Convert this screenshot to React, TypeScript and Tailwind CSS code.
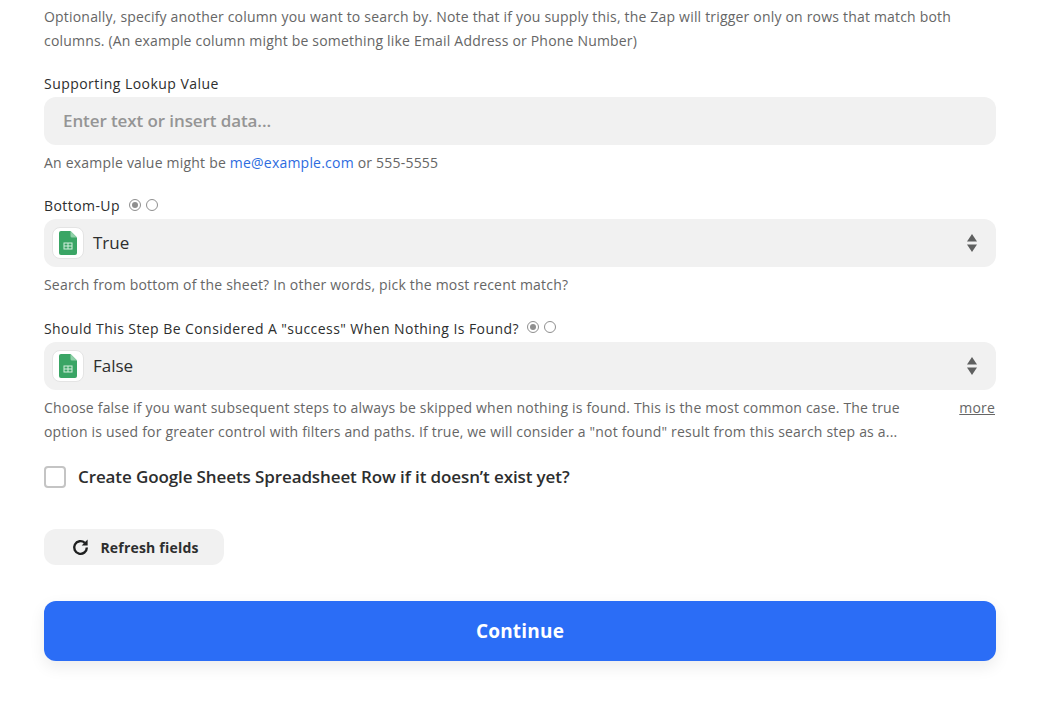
function SheetIcon() {
  return (
    <span className="flex h-[32px] w-[32px] shrink-0 items-center justify-center rounded-[8px] border border-[#e4e4e4] bg-white">
      <svg width="18" height="24" viewBox="0 0 18 24">
        <path d="M2 0H11.5L18 6.5V22a2 2 0 0 1-2 2H2a2 2 0 0 1-2-2V2a2 2 0 0 1 2-2Z" fill="#3aa565" />
        <path d="M11.5 0L18 6.5H13a1.5 1.5 0 0 1-1.5-1.5Z" fill="#8fd0a8" />
        <path d="M4.5 11.5H13.5V18.5H4.5Z" fill="#d5efdf" />
        <path d="M5.5 12.5H8.5V14.5H5.5ZM9.5 12.5H12.5V14.5H9.5ZM5.5 15.5H8.5V17.5H5.5ZM9.5 15.5H12.5V17.5H9.5Z" fill="#3aa565" />
      </svg>
    </span>
  );
}

function Radios({ lift }: { lift: string }) {
  return (
    <span className={`flex items-center gap-[5px] ${lift}`}>
      <span className="flex h-[12px] w-[12px] items-center justify-center rounded-full border border-[#8f8f8f] bg-white">
        <span className="h-[6px] w-[6px] rounded-full bg-[#8f8f8f]" />
      </span>
      <span className="h-[12px] w-[12px] rounded-full border border-[#8f8f8f] bg-white" />
    </span>
  );
}

function Select({ value }: { value: string }) {
  return (
    <div className="flex h-[48px] items-center rounded-[12px] bg-[#f1f1f1] pl-[8px] pr-[19px]">
      <SheetIcon />
      <span className="ml-[9px] flex-1 text-[17px] font-medium leading-[24px] text-[#2d2e2e]">{value}</span>
      <svg width="10" height="18" viewBox="0 0 10 18" fill="#5f6060">
        <path d="M5 0L10 7.5H0Z" />
        <path d="M5 18L0 10.5H10Z" />
      </svg>
    </div>
  );
}

export default function App() {
  return (
    <div className="h-[710px] w-[1049px] overflow-hidden bg-white font-['Open_Sans',sans-serif]">
      <div className="ml-[44px] flex w-[952px] flex-col pt-[5px]">
        <p className="text-[14px] leading-[24px] tracking-[0.19px] text-[#666666]">
          Optionally, specify another column you want to search by. Note that if you supply this, the Zap will trigger only on rows that match both
          <br />
          columns. (An example column might be something like Email Address or Phone Number)
        </p>

        <label className="mt-[21px] text-[14px] font-medium leading-[20px] tracking-[0.46px] text-[#2d2e2e]">Supporting Lookup Value</label>
        <div className="mt-[3px] flex h-[48px] items-center rounded-[12px] bg-[#f1f1f1] px-[19px] text-[17px] font-semibold tracking-[-0.1px] text-[#959595]">
          Enter text or insert data...
        </div>
        <p className="mt-[6px] text-[14px] leading-[24px] tracking-[0.21px] text-[#666666]">
          An example value might be <span className="text-[#2d6cdf]">me@example.com</span> or 555-5555
        </p>

        <div className="mt-[21px] flex h-[20px] items-center">
          <span className="text-[14px] font-medium leading-[20px] tracking-[0.43px] text-[#2d2e2e]">Bottom-Up</span>
          <Radios lift="-mt-[3px] ml-[9px]" />
        </div>
        <div className="mt-[3px]">
          <Select value="True" />
        </div>
        <p className="mt-[6px] text-[14px] leading-[24px] tracking-[0.19px] text-[#666666]">
          Search from bottom of the sheet? In other words, pick the most recent match?
        </p>

        <div className="mt-[22px] flex h-[20px] items-center">
          <span className="text-[14px] font-medium leading-[20px] tracking-[0.43px] text-[#2d2e2e]">
            Should This Step Be Considered A "success" When Nothing Is Found?
          </span>
          <Radios lift="-mt-[4px] ml-[8px]" />
        </div>
        <div className="mt-[3px]">
          <Select value="False" />
        </div>
        <div className="mt-[6px] flex justify-between text-[14px] leading-[24px] tracking-[0.19px] text-[#666666]">
          <p>
            Choose false if you want subsequent steps to always be skipped when nothing is found. This is the most common case. The true
            <br />
            option is used for greater control with filters and paths. If true, we will consider a "not found" result from this search step as a...
          </p>
          <span className="mr-[1px] underline">more</span>
        </div>

        <div className="mt-[21px] flex h-[24px] items-center">
          <span className="h-[22px] w-[22px] rounded-[4px] border-2 border-[#c4c4c4] bg-white" />
          <span className="ml-[12px] text-[17px] font-semibold leading-[24px] tracking-[-0.11px] text-[#2d2e2e]">
            Create Google Sheets Spreadsheet Row if it doesn’t exist yet?
          </span>
        </div>

        <button className="mt-[40px] flex h-[36px] w-[180px] items-center justify-center rounded-[12px] bg-[#f1f1f1] pl-[2px] text-[14px] font-bold tracking-[0.2px] text-[#2d2e2e]">
          <svg width="19" height="19" viewBox="0 0 24 24" fill="none" stroke="#1f2020" strokeWidth="3">
            <path d="M20 12a8 8 0 1 1-2.6-5.9" />
            <path d="M21 2V9.5H13.5Z" fill="#1f2020" stroke="none" />
          </svg>
          <span className="ml-[10px]">Refresh fields</span>
        </button>

        <button className="mt-[36px] flex h-[60px] items-center justify-center rounded-[12px] bg-[#2b6df6] text-[19px] font-bold tracking-[0.2px] text-white shadow-[0_6px_16px_rgba(0,0,0,0.08)]">
          Continue
        </button>
      </div>
    </div>
  );
}
